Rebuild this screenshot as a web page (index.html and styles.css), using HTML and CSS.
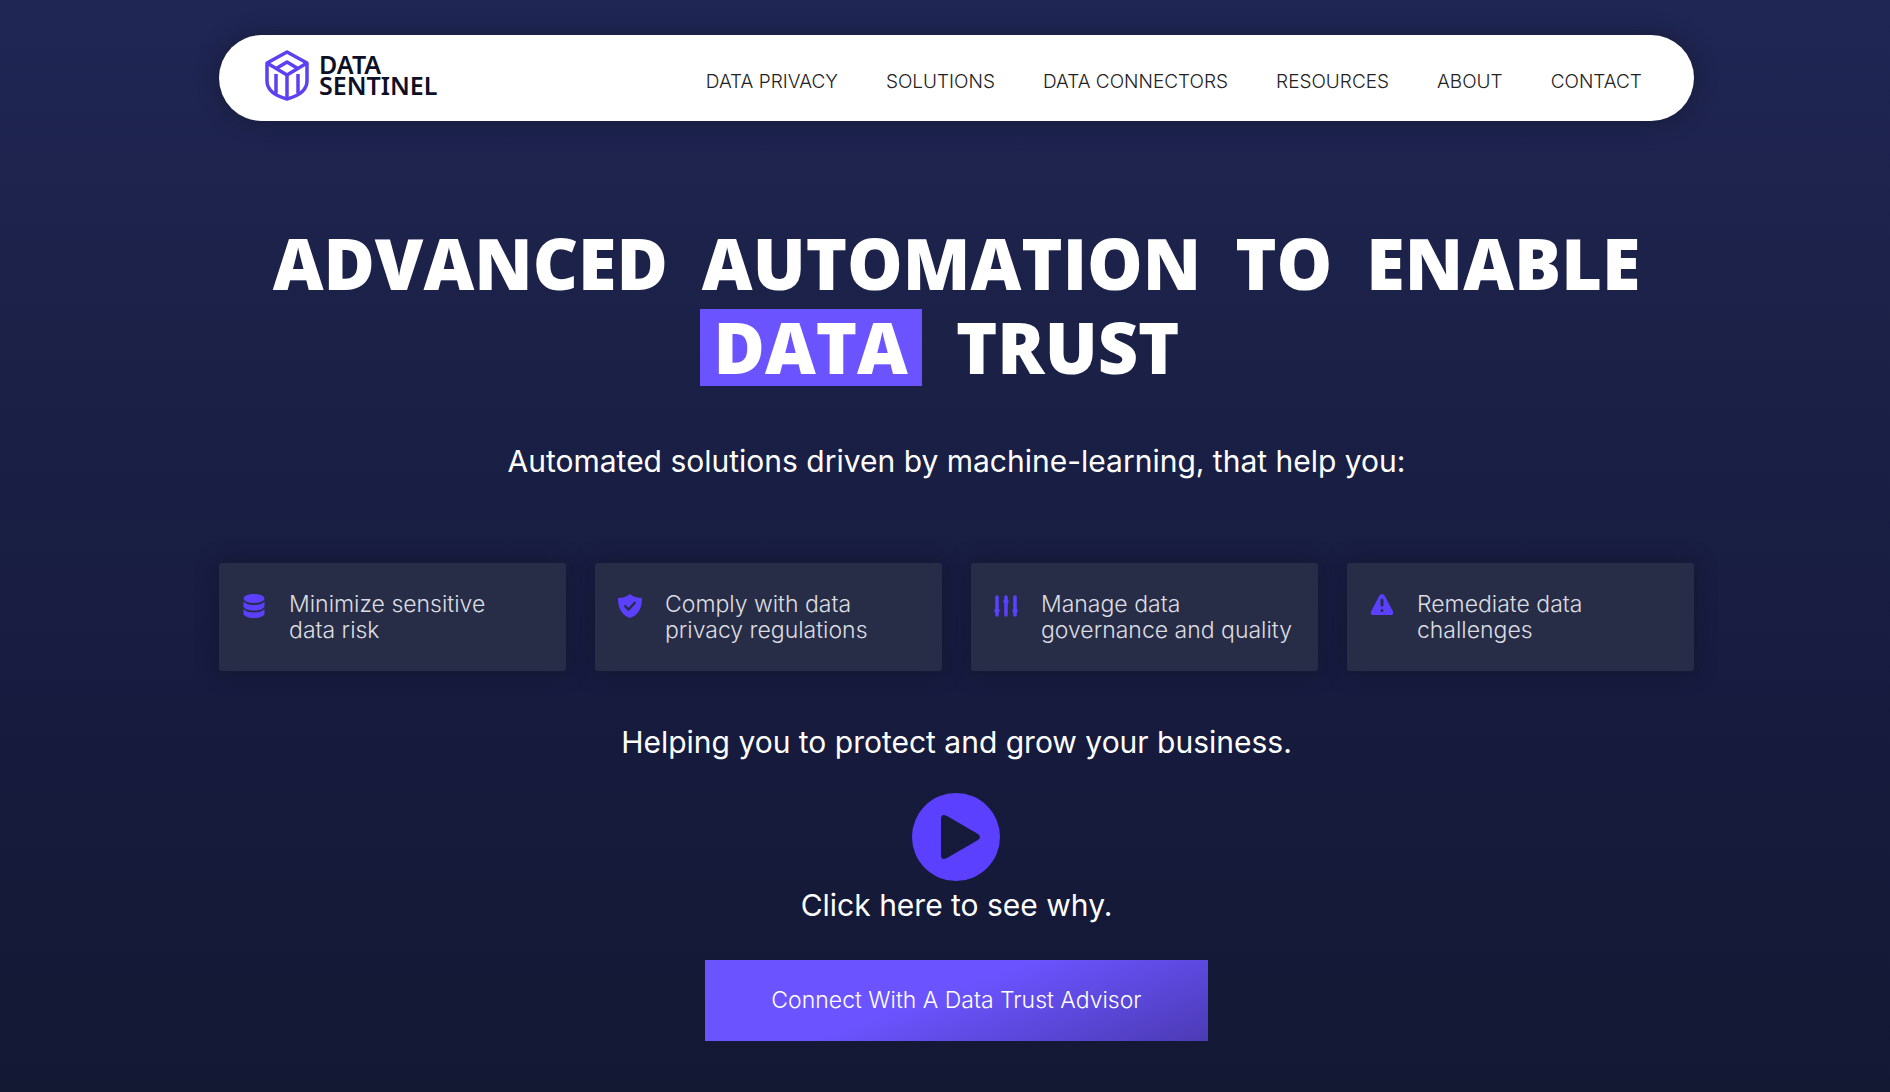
FILE: index.html
```
<!DOCTYPE html>
<html lang="en">
<head>
    <meta charset="UTF-8">
    <meta name="viewport" content="width=device-width, initial-scale=1.0">
    <title>Data Sentinel</title>
    <link rel="stylesheet" href="styles.css">
</head>
<body>
    <div class="container">
        <header class="header">
            <a href="#" class="logo">
                <svg class="logo-icon" viewBox="0 0 44 51" fill="none" stroke="#5b41f0" stroke-width="3.500" stroke-linejoin="round" aria-hidden="true">
                    <path d="M22 2 L42 13 V31 C42 41 33 46 22 49 C11 46 2 41 2 31 V13 Z"/>
                    <path d="M2 13 L22 25 L42 13"/>
                    <path d="M22 25 V49"/>
                    <path d="M12 18 L22 12 L32 18"/>
                    <path d="M11 24 V43 M33 24 V43"/>
                </svg>
                <span class="logo-text">DATA<br>SENTINEL</span>
            </a>
            <nav class="nav">
                <a href="#">DATA PRIVACY</a>
                <a href="#">SOLUTIONS</a>
                <a href="#">DATA CONNECTORS</a>
                <a href="#">RESOURCES</a>
                <a href="#">ABOUT</a>
                <a href="#">CONTACT</a>
            </nav>
        </header>

        <main class="hero">
            <h1 class="title">
                <span>ADVANCED</span>
                <span>AUTOMATION</span>
                <span>TO</span>
                <span>ENABLE</span>
                <span class="highlight">DATA</span>
                <span>TRUST</span>
            </h1>
            <p class="lead">Automated solutions driven by machine-learning, that help you:</p>

            <!-- Feature cards -->
            <ul class="cards">
                <li class="card">
                    <svg viewBox="0 0 24 24" fill="#5b41ff" aria-hidden="true">
                        <ellipse cx="12" cy="4.500" rx="10.500" ry="4.500"/>
                        <path d="M1.500 7.500C3.500 10 7 11 12 11s8.500-1 10.500-3.500V12c0 2.500-4.500 4.500-10.500 4.500S1.500 14.500 1.500 12z"/>
                        <path d="M1.500 15C3.500 17.500 7 18.500 12 18.500s8.500-1 10.500-3.500v4.500c0 2.500-4.500 4.500-10.500 4.500S1.500 22 1.500 19.500z"/>
                    </svg>
                    <p>Minimize sensitive<br>data risk</p>
                </li>
                <li class="card">
                    <svg viewBox="0 0 24 24" aria-hidden="true">
                        <path fill="#5b41ff" d="M12 0C9 2.500 5 4 0 4c0 9 2.500 16.500 12 20 9.500-3.500 12-11 12-20-5 0-9-1.500-12-4z"/>
                        <path fill="none" stroke="#282d47" stroke-width="2.400" d="M6.500 11.500l4 4L17.500 8"/>
                    </svg>
                    <p>Comply with data<br>privacy regulations</p>
                </li>
                <li class="card">
                    <svg viewBox="0 0 24 24" aria-hidden="true">
                        <path fill="none" stroke="#5b41ff" stroke-width="3.500" stroke-linecap="round" d="M3 3v18M12 3v18M21 3v18"/>
                        <path fill="#5b41ff" d="M0 16.500L3 13l3 3.500L3 21zM9 7.500L12 3l3 4.500-3 4zM18 16.500l3-3.500 3 3.500-3 4.500z"/>
                    </svg>
                    <p>Manage data<br>governance and quality</p>
                </li>
                <li class="card">
                    <svg viewBox="0 0 24 24" aria-hidden="true">
                        <path fill="#5b41ff" d="M9.500 1.500q2.500-3 5 0l8.500 16q1 3.500-2.500 3.500h-17Q0 21 1 17.500z"/>
                        <path fill="none" stroke="#282d47" stroke-width="3" stroke-linecap="round" d="M12 6v5M12 16.500v.1"/>
                    </svg>
                    <p>Remediate data<br>challenges</p>
                </li>
            </ul>

            <p class="lead">Helping you to protect and grow your business.</p>
            <button type="button" class="play" aria-label="Play video">
                <svg viewBox="0 0 88 88" aria-hidden="true">
                    <path fill="#5b41ff" fill-rule="evenodd" d="M44 0a44 44 0 1 0 0 88a44 44 0 0 0 0-88zM35 23l31 18q4 3 0 6L35 65q-6 3-6-3V26q0-6 6-3z"/>
                </svg>
            </button>
            <p class="lead">Click here to see why.</p>
            <a href="#" class="cta">Connect With A Data Trust Advisor</a>
        </main>
    </div>
</body>
</html>
```
FILE: styles.css
```
* {
    box-sizing: border-box;
}
body {
    margin: 0;
    min-height: 100vh;
    padding-left: 23px;
    font-family: Inter, "Open Sans", sans-serif;
    font-weight: 300;
    color: #fff;
    background: linear-gradient(180deg, #1f2654 0%, #1b2147 30%, #171c40 60%, #131833 100%);
}
.container {
    width: 79%;
    margin: 0 auto;
    padding: 35px 0 48px;
}

/* Header */
.header {
    display: flex;
    align-items: center;
    justify-content: space-between;
    height: 86px;
    padding: 0 52px 0 46px;
    background: #fff;
    border-radius: 43px;
    box-shadow: 0 0 20px rgba(20, 22, 40, 0.6);
}
.logo {
    display: flex;
    align-items: center;
    gap: 10px;
    margin-bottom: 6px;
    color: #0f0f26;
    text-decoration: none;
}
.logo-icon {
    width: 44px;
    height: 51px;
}
.logo-text {
    font-family: "Noto Sans", sans-serif;
    font-size: 25px;
    font-weight: 600;
    line-height: 21px;
}
.nav {
    display: flex;
    gap: 48px;
    padding-top: 7px;
}
.nav a {
    color: #222;
    font-size: 19px;
    text-decoration: none;
}

/* Hero */
.hero {
    display: flex;
    flex-direction: column;
    align-items: center;
    padding-top: 100px;
    text-align: center;
}
.title {
    display: flex;
    flex-wrap: wrap;
    align-items: center;
    justify-content: center;
    column-gap: 34px;
    margin: 0 0 52px;
    font-family: "Open Sans", sans-serif;
    font-size: 70px;
    font-weight: 800;
    line-height: 84px;
}
.title span:last-child {
    margin-right: 34px;
}
.title .highlight {
    padding: 0 14px;
    line-height: 77px;
    background: #6b54ff;
}
.lead {
    margin: 0;
    font-size: 30px;
    font-weight: 400;
    line-height: 40px;
}
.cards {
    display: grid;
    grid-template-columns: repeat(4, minmax(0, 1fr));
    gap: 29px;
    width: 100%;
    margin: 82px 0 51px;
    padding: 0;
    list-style: none;
}
.card {
    display: flex;
    gap: 23px;
    padding: 28px 23px;
    color: #dcdde2;
    font-size: 23px;
    line-height: 26px;
    text-align: left;
    background: #282d47;
    border-radius: 3px;
    box-shadow: 0 0 20px rgba(16, 18, 36, 0.6);
}
.card svg {
    flex: none;
    width: 24px;
    height: 24px;
    margin-top: 3px;
}
.card p {
    margin: 0;
    white-space: nowrap;
}
.play {
    width: 88px;
    height: 88px;
    margin: 31px 0 4px;
    padding: 0;
    background: none;
    border: none;
    cursor: pointer;
}
.play svg {
    display: block;
}
.cta {
    margin-top: 35px;
    padding: 24px 66px;
    color: #fff;
    font-size: 23px;
    line-height: 33px;
    text-decoration: none;
    background: linear-gradient(160deg, #6b54ff 45%, #4c3bb5 100%);
}
```
